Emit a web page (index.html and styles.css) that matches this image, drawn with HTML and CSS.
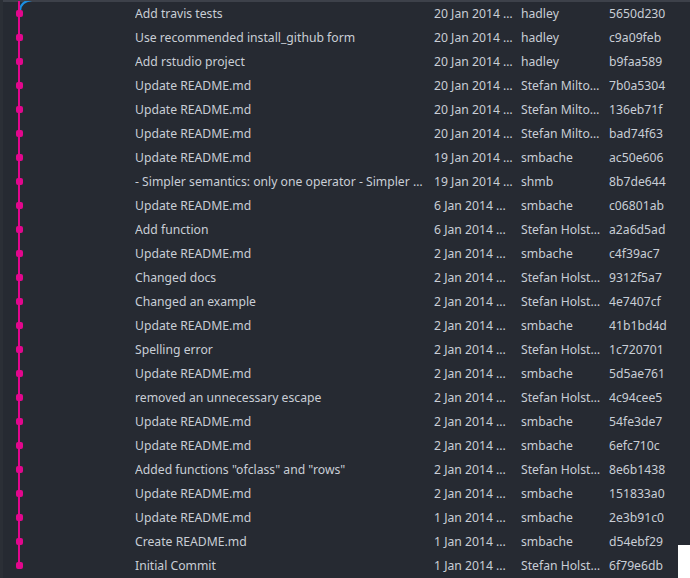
FILE: index.html
```html
<!DOCTYPE html>
<html lang="en">
<head>
    <meta charset="UTF-8">
    <title>history</title>
    <link rel="stylesheet" href="styles.css">
</head>
<body>
    <main class="history">
        <div class="commit first">
            <div class="graph">
                <svg class="branch" width="20" height="12" viewBox="0 0 20 12">
                    <path d="M1 11 C1 5 5 1 13 0" fill="none" stroke="#1b8fe2" stroke-width="2"/>
                </svg>
            </div>
            <div class="msg">Add travis tests</div>
            <div class="date">20 Jan 2014 15:20</div>
            <div class="author">hadley</div>
            <div class="hash">5650d230</div>
        </div>
        <div class="commit">
            <div class="graph"></div>
            <div class="msg">Use recommended install_github form</div>
            <div class="date">20 Jan 2014 15:18</div>
            <div class="author">hadley</div>
            <div class="hash">c9a09feb</div>
        </div>
        <div class="commit">
            <div class="graph"></div>
            <div class="msg">Add rstudio project</div>
            <div class="date">20 Jan 2014 15:16</div>
            <div class="author">hadley</div>
            <div class="hash">b9faa589</div>
        </div>
        <div class="commit">
            <div class="graph"></div>
            <div class="msg">Update README.md</div>
            <div class="date">20 Jan 2014 10:41</div>
            <div class="author">Stefan Milton Bache</div>
            <div class="hash">7b0a5304</div>
        </div>
        <div class="commit">
            <div class="graph"></div>
            <div class="msg">Update README.md</div>
            <div class="date">20 Jan 2014 10:38</div>
            <div class="author">Stefan Milton Bache</div>
            <div class="hash">136eb71f</div>
        </div>
        <div class="commit">
            <div class="graph"></div>
            <div class="msg">Update README.md</div>
            <div class="date">20 Jan 2014 10:33</div>
            <div class="author">Stefan Milton Bache</div>
            <div class="hash">bad74f63</div>
        </div>
        <div class="commit">
            <div class="graph"></div>
            <div class="msg">Update README.md</div>
            <div class="date">19 Jan 2014 22:12</div>
            <div class="author">smbache</div>
            <div class="hash">ac50e606</div>
        </div>
        <div class="commit">
            <div class="graph"></div>
            <div class="msg">- Simpler semantics: only one operator - Simpler semantics for lambdas</div>
            <div class="date">19 Jan 2014 21:50</div>
            <div class="author">shmb</div>
            <div class="hash">8b7de644</div>
        </div>
        <div class="commit">
            <div class="graph"></div>
            <div class="msg">Update README.md</div>
            <div class="date">6 Jan 2014 ...</div>
            <div class="author">smbache</div>
            <div class="hash">c06801ab</div>
        </div>
        <div class="commit">
            <div class="graph"></div>
            <div class="msg">Add function</div>
            <div class="date">6 Jan 2014 ...</div>
            <div class="author">Stefan Holst Bache</div>
            <div class="hash">a2a6d5ad</div>
        </div>
        <div class="commit">
            <div class="graph"></div>
            <div class="msg">Update README.md</div>
            <div class="date">2 Jan 2014 ...</div>
            <div class="author">smbache</div>
            <div class="hash">c4f39ac7</div>
        </div>
        <div class="commit">
            <div class="graph"></div>
            <div class="msg">Changed docs</div>
            <div class="date">2 Jan 2014 ...</div>
            <div class="author">Stefan Holst Bache</div>
            <div class="hash">9312f5a7</div>
        </div>
        <div class="commit">
            <div class="graph"></div>
            <div class="msg">Changed an example</div>
            <div class="date">2 Jan 2014 ...</div>
            <div class="author">Stefan Holst Bache</div>
            <div class="hash">4e7407cf</div>
        </div>
        <div class="commit">
            <div class="graph"></div>
            <div class="msg">Update README.md</div>
            <div class="date">2 Jan 2014 ...</div>
            <div class="author">smbache</div>
            <div class="hash">41b1bd4d</div>
        </div>
        <div class="commit">
            <div class="graph"></div>
            <div class="msg">Spelling error</div>
            <div class="date">2 Jan 2014 ...</div>
            <div class="author">Stefan Holst Bache</div>
            <div class="hash">1c720701</div>
        </div>
        <div class="commit">
            <div class="graph"></div>
            <div class="msg">Update README.md</div>
            <div class="date">2 Jan 2014 ...</div>
            <div class="author">smbache</div>
            <div class="hash">5d5ae761</div>
        </div>
        <div class="commit">
            <div class="graph"></div>
            <div class="msg">removed an unnecessary escape</div>
            <div class="date">2 Jan 2014 ...</div>
            <div class="author">Stefan Holst Bache</div>
            <div class="hash">4c94cee5</div>
        </div>
        <div class="commit">
            <div class="graph"></div>
            <div class="msg">Update README.md</div>
            <div class="date">2 Jan 2014 ...</div>
            <div class="author">smbache</div>
            <div class="hash">54fe3de7</div>
        </div>
        <div class="commit">
            <div class="graph"></div>
            <div class="msg">Update README.md</div>
            <div class="date">2 Jan 2014 ...</div>
            <div class="author">smbache</div>
            <div class="hash">6efc710c</div>
        </div>
        <div class="commit">
            <div class="graph"></div>
            <div class="msg">Added functions "ofclass" and "rows"</div>
            <div class="date">2 Jan 2014 ...</div>
            <div class="author">Stefan Holst Bache</div>
            <div class="hash">8e6b1438</div>
        </div>
        <div class="commit">
            <div class="graph"></div>
            <div class="msg">Update README.md</div>
            <div class="date">2 Jan 2014 ...</div>
            <div class="author">smbache</div>
            <div class="hash">151833a0</div>
        </div>
        <div class="commit">
            <div class="graph"></div>
            <div class="msg">Update README.md</div>
            <div class="date">1 Jan 2014 ...</div>
            <div class="author">smbache</div>
            <div class="hash">2e3b91c0</div>
        </div>
        <div class="commit">
            <div class="graph"></div>
            <div class="msg">Create README.md</div>
            <div class="date">1 Jan 2014 ...</div>
            <div class="author">smbache</div>
            <div class="hash">d54ebf29</div>
        </div>
        <div class="commit last">
            <div class="graph"></div>
            <div class="msg">Initial Commit</div>
            <div class="date">1 Jan 2014 ...</div>
            <div class="author">Stefan Holst Bache</div>
            <div class="hash">6f79e6db</div>
        </div>
        <div class="corner"></div>
    </main>
</body>
</html>
```

FILE: styles.css
```css
*{
    margin: 0;
    padding: 0;
    box-sizing: border-box;
}
body{
    background-color: #262a32;
    font-family: "Noto Sans", "Open Sans", sans-serif;
    font-size: 12.2px;
    color: #c9ced6;
    overflow: hidden;
}
.history{
    position: relative;
    height: 578px;
    padding-top: 1px;
    border-left: 3px solid #2b2f36;
}
.history::before{
    content: "";
    position: absolute;
    top: 0;
    left: 0;
    right: 0;
    height: 2px;
    background-color: #3d414a;
}
.commit{
    display: flex;
    height: 24px;
    line-height: 24px;
}
.commit > div{
    white-space: nowrap;
    overflow: hidden;
    text-overflow: ellipsis;
}
.commit > div:not(.graph){
    padding-top: 1px;
}
.graph{
    position: relative;
    width: 132px;
    flex: none;
}
.graph::before{
    content: "";
    position: absolute;
    left: 15px;
    top: 0;
    bottom: 0;
    width: 2px;
    background-color: #e2078d;
    z-index: 1;
}
.first .graph::before{
    top: -1px;
}
.last .graph::before{
    bottom: 12px;
}
.graph::after{
    content: "";
    position: absolute;
    left: 12.5px;
    top: 8.5px;
    width: 7px;
    height: 7px;
    border-radius: 2px;
    background-color: #e2078d;
    z-index: 1;
}
.branch{
    position: absolute;
    left: 16px;
    top: -1px;
}
.msg{
    width: 299px;
    flex: none;
    padding-right: 6px;
}
.date{
    width: 87px;
    flex: none;
    padding-right: 8px;
}
.author{
    width: 88px;
    flex: none;
    padding-right: 6px;
}
.hash{
    flex: 1;
}
.corner{
    position: absolute;
    right: 0;
    bottom: 0;
    width: 12px;
    height: 33px;
    background-color: #ffffff;
}
```
